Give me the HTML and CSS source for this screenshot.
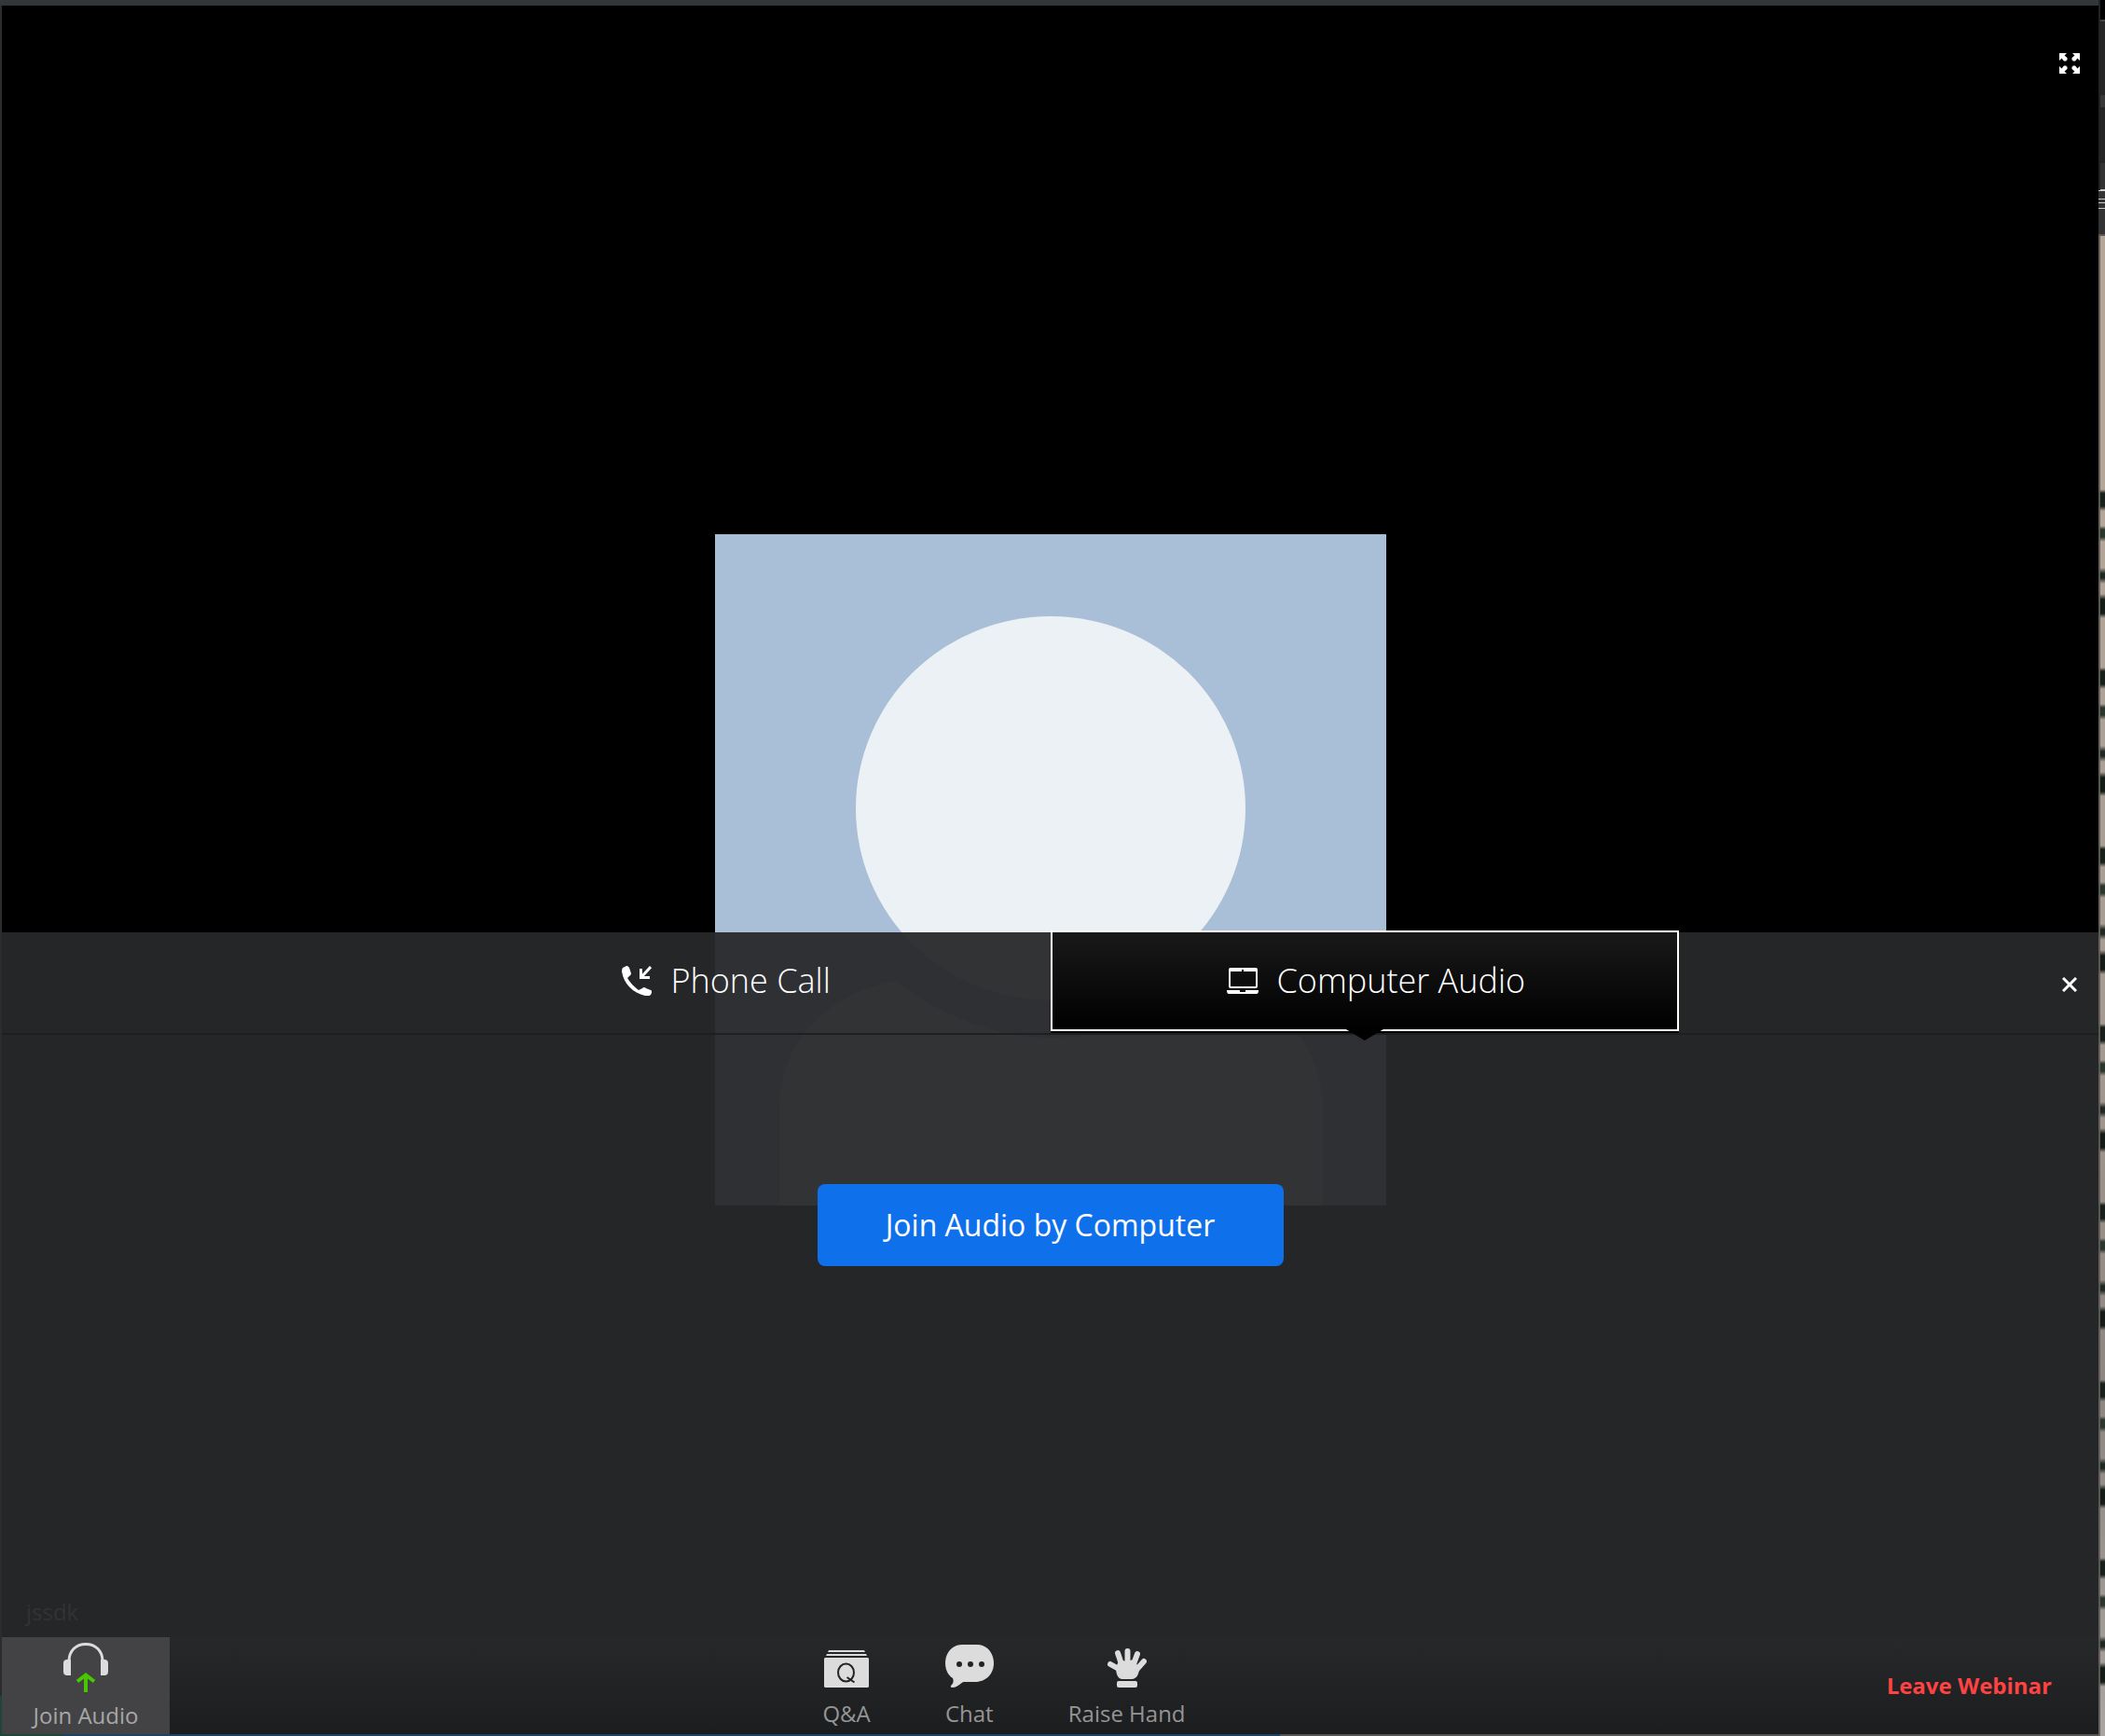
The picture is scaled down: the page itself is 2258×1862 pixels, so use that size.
FILE: index.html
```
<!DOCTYPE html>
<html lang="en">
<head>
<meta charset="utf-8">
<title>Webinar</title>
<link rel="stylesheet" href="styles.css">
</head>
<body>
<div class="desktop">
  <main class="window">
    <button class="fullscreen" aria-label="Enter full screen">
      <svg width="22" height="22" viewBox="0 0 22 22" fill="#fff">
        <g id="corner"><path d="M0 0H8L5.500 2.500L8.500 5V7.500H7.500V8.500H5L2.500 5.500L0 8Z"/></g>
        <use href="#corner" transform="matrix(-1 0 0 1 22 0)"/>
        <use href="#corner" transform="matrix(1 0 0 -1 0 22)"/>
        <use href="#corner" transform="matrix(-1 0 0 -1 22 22)"/>
      </svg>
    </button>
    <div class="stage">
      <svg class="avatar" viewBox="0 0 720 720" role="img" aria-label="Participant">
        <rect width="720" height="720" fill="#a9bed7"/>
        <path d="M69 720V616C69 552 110 495 194 479C240 515 300 540 360 540C420 540 482 515 526 479C610 495 652 552 652 616V720Z" fill="#ecf1f6"/>
        <ellipse cx="360" cy="294" rx="209" ry="206" fill="#ecf1f6"/>
      </svg>
    </div>

    <section class="audio-panel" aria-label="Join audio">
      <header class="tabs">
        <button class="tab tab-phone">
          <svg width="32" height="32" viewBox="0 0 32 32" fill="#fff">
            <path d="M1 2L5 0Q7 0 8 2L10 8Q10 10 8 11L6 13Q10 20 18 26L22 24Q24 22 26 24L31 26Q33 27 32 29L31 31Q29 33 25 32C12 29 2 19 0 6Q0 3 1 2Z"/>
            <path d="M31 1L21 12M20.500 3V12.500H30" fill="none" stroke="#fff" stroke-width="3"/>
          </svg>
          <span>Phone Call</span>
        </button>
        <button class="tab tab-computer">
          <svg width="34" height="28" viewBox="0 0 34 28" fill="#fff">
            <path fill-rule="evenodd" d="M4 0H31Q33 0 33 2V20Q33 22 31 22H4Q2 22 2 20V2Q2 0 4 0ZM4 4V20H31V4H18V2H16V4Z"/>
            <path d="M0 24H14V26H20V24H34Q34 28 32 28H2Q0 28 0 24Z"/>
          </svg>
          <span>Computer Audio</span>
        </button>
        <button class="close" aria-label="Close">
          <svg width="16" height="16" viewBox="0 0 16 16"><path d="M1 1L15 15M15 1L1 15" stroke="#fff" stroke-width="3"/></svg>
        </button>
      </header>
      <div class="panel-body">
        <button class="join-button">Join Audio by Computer</button>
        <p class="user-name">jssdk</p>
      </div>
    </section>

    <footer class="toolbar">
      <div class="toolbar-left">
        <button class="tool join-audio">
          <svg width="48" height="54" viewBox="0 0 48 54">
            <path d="M6 20C6 8 14 1.500 24 1.500S42 8 42 20" fill="none" stroke="#dcdcdc" stroke-width="3"/>
            <path d="M4 18H8V35H4Q0 35 0 31V22Q0 18 4 18ZM44 18H40V35H44Q48 35 48 31V22Q48 18 44 18Z" fill="#dcdcdc"/>
            <path d="M24 53V35M15 41.500L24 34.500L33 41.500" fill="none" stroke="#47c700" stroke-width="4"/>
          </svg>
          <span>Join Audio</span>
        </button>
      </div>
      <nav class="toolbar-middle">
        <button class="tool">
          <svg width="48" height="40" viewBox="0 0 48 40">
            <path d="M5 0H43L44 2H4ZM3 4H45L46 6H2ZM1 8H47L48 9V39L47 40H1L0 39V9Z" fill="#dcdcdc"/>
            <ellipse cx="23.500" cy="24" rx="8.500" ry="9.500" fill="none" stroke="#222325" stroke-width="2"/>
            <path d="M24.500 29L32.500 34.500" stroke="#222325" stroke-width="2"/>
          </svg>
          <span>Q&amp;A</span>
        </button>
        <button class="tool">
          <svg width="52" height="46" viewBox="0 0 52 46">
            <path d="M18 0H34C45 0 52 9 52 20S44 40 32 40H20C17 40 14 46 8 46Q5 46 6 44C9 42 9 38 8 36C3 33 0 27 0 20C0 9 7 0 18 0Z" fill="#dcdcdc"/>
            <g fill="#222325"><circle cx="15" cy="21" r="3"/><circle cx="27" cy="21" r="3"/><circle cx="39" cy="21" r="3"/></g>
          </svg>
          <span>Chat</span>
        </button>
        <button class="tool">
          <svg width="42" height="42" viewBox="0 0 42 42">
            <path d="M3 17L12 22M11 5L15 17M21.500 3V17M32 6L28 17M39 14L31 23" stroke="#dcdcdc" stroke-width="6" stroke-linecap="round"/>
            <path d="M9 20L13 12L20 14L28 12L34 21C34 28 31 33 26 33H16C11 33 9 27 9 20Z" fill="#dcdcdc"/>
            <rect x="10" y="35" width="22" height="7" rx="2" fill="#dcdcdc"/>
          </svg>
          <span>Raise Hand</span>
        </button>
      </nav>
      <div class="toolbar-right">
        <button class="leave">Leave Webinar</button>
      </div>
    </footer>
  </main>
</div>
</body>
</html>
```
FILE: styles.css
```
* { box-sizing: border-box; }

body {
  margin: 0;
  font-family: "Open Sans", "Noto Sans", sans-serif;
  color: #fff;
}

button {
  margin: 0;
  padding: 0;
  border: 0;
  background: none;
  color: inherit;
  font: inherit;
  cursor: pointer;
}

svg { display: block; flex: none; }

/* The desktop shows as a thin rim around the window. */
.desktop {
  min-height: 100vh;
  display: grid;
  padding: 6px 7px 2px 2px;
  background:
    linear-gradient(#33383b, #303538) 0 0 / calc(100% - 7px) 6px no-repeat,
    linear-gradient(90deg, #1f4638 0 68px, #1d4361 68px 61%, #555453 61%) 0 100% / calc(100% - 7px) 2px no-repeat,
    linear-gradient(#2b2c2d 0 1819px, #1f4638 1819px) 0 0 / 2px 100% no-repeat,
    linear-gradient(90deg, #222 0 2px, transparent 2px) 100% 0 / 7px 204px no-repeat,
    linear-gradient(#000 0 21px, #444 21px 23px, #262626 23px 102px, #383838 102px 115px, #252525 115px 175px, #333 175px 203px, #ccc 203px 205px, #333 205px 213px, #ccc 213px 214px, #333 214px 217px, #ccc 217px 218px, #333 218px 223px, #ccc 223px 224px, #333 224px 251px, #555 251px 253px, transparent 253px) 100% 0 / 7px 100% no-repeat,
    linear-gradient(90deg, rgba(96, 92, 90, .9) 0 2px, transparent 2px) 100% 0 / 7px 100% no-repeat,
    repeating-linear-gradient(transparent 0 19px, #17201a 23px 37px, transparent 42px 58px, #29372d 62px 70px, transparent 75px 103px, #202823 109px 114px, transparent 120px 131px, #141c17 137px 152px, transparent 157px 191px) 100% 506px / 7px 100% no-repeat,
    linear-gradient(#b5a697 0 30%, #aaa096 45%, #a59a8f 60%, #8c8580 80%, #aaa5a0) 100% 0 / 7px 100% no-repeat;
}

.window {
  display: grid;
  grid-template-rows: 994fr 756fr 104px;
  background: #000;
  position: relative;
}

.fullscreen {
  position: absolute;
  top: 51px;
  right: 20px;
}

.stage {
  grid-area: 1 / 1 / 4 / 2;
  display: grid;
  place-items: center;
}

.avatar { width: 33%; min-width: 320px; max-width: 720px; }

.audio-panel {
  grid-area: 2 / 1 / 4 / 2;
  position: relative;
  display: flex;
  flex-direction: column;
  background: rgba(39, 40, 42, .95);
}

.tabs {
  display: grid;
  grid-template-columns: 20fr 30fr 30fr 20fr;
  height: 110px;
  border-bottom: 2px solid #1e1f20;
}

.tab {
  display: flex;
  align-items: center;
  justify-content: center;
  gap: 20px;
  margin: -2px 0 2px;
  font-size: 36px;
  font-weight: 300;
  line-height: 48px;
}

.tab-phone { grid-column: 2; padding-right: 20px; }

.tab-computer {
  position: relative;
  grid-column: 3;
  padding-left: 24px;
  border: 2px solid #fff;
  background: linear-gradient(#191919, #000);
  box-shadow: 0 2px #000;
}

.tab-computer::after {
  content: "";
  position: absolute;
  top: 100%;
  left: calc(50% - 20px);
  width: 40px;
  height: 12px;
  background: #000;
  clip-path: polygon(0 0, 100% 0, 50% 100%);
}

.close {
  justify-self: end;
  padding: 4px 23px 0 24px;
}

.panel-body {
  flex: 1;
  display: flex;
  flex-direction: column;
  align-items: center;
  justify-content: space-between;
  padding: 160px 24px 104px;
}

.join-button {
  width: 500px;
  max-width: 100%;
  height: 88px;
  padding-bottom: 2px;
  border-radius: 8px;
  background: #0e71eb;
  font-size: 32px;
}

.user-name {
  align-self: flex-start;
  margin: 0;
  padding: 0 2px 10px;
  color: #323335;
  font-size: 24px;
  line-height: 34px;
}

.toolbar {
  grid-area: 3 / 1 / 4 / 2;
  position: relative;
  display: flex;
  justify-content: space-between;
  background: linear-gradient(#27282a, #1c1d1f);
  color: #959596;
  font-size: 24px;
  line-height: 32px;
}

.toolbar-left, .toolbar-right { flex: 1; display: flex; }
.toolbar-right { justify-content: flex-end; align-items: center; }

.tool {
  display: flex;
  flex-direction: column;
  align-items: center;
  justify-content: flex-end;
  padding-bottom: 6px;
  gap: 12px;
}

.join-audio {
  width: 180px;
  padding-bottom: 4px;
  gap: 8px;
  background: #434345;
  color: #a7a7a8;
}

.toolbar-middle { display: flex; gap: 80px; padding-right: 99px; }

.leave {
  padding-right: 50px;
  color: #ff4242;
  font-weight: 700;
}
```
